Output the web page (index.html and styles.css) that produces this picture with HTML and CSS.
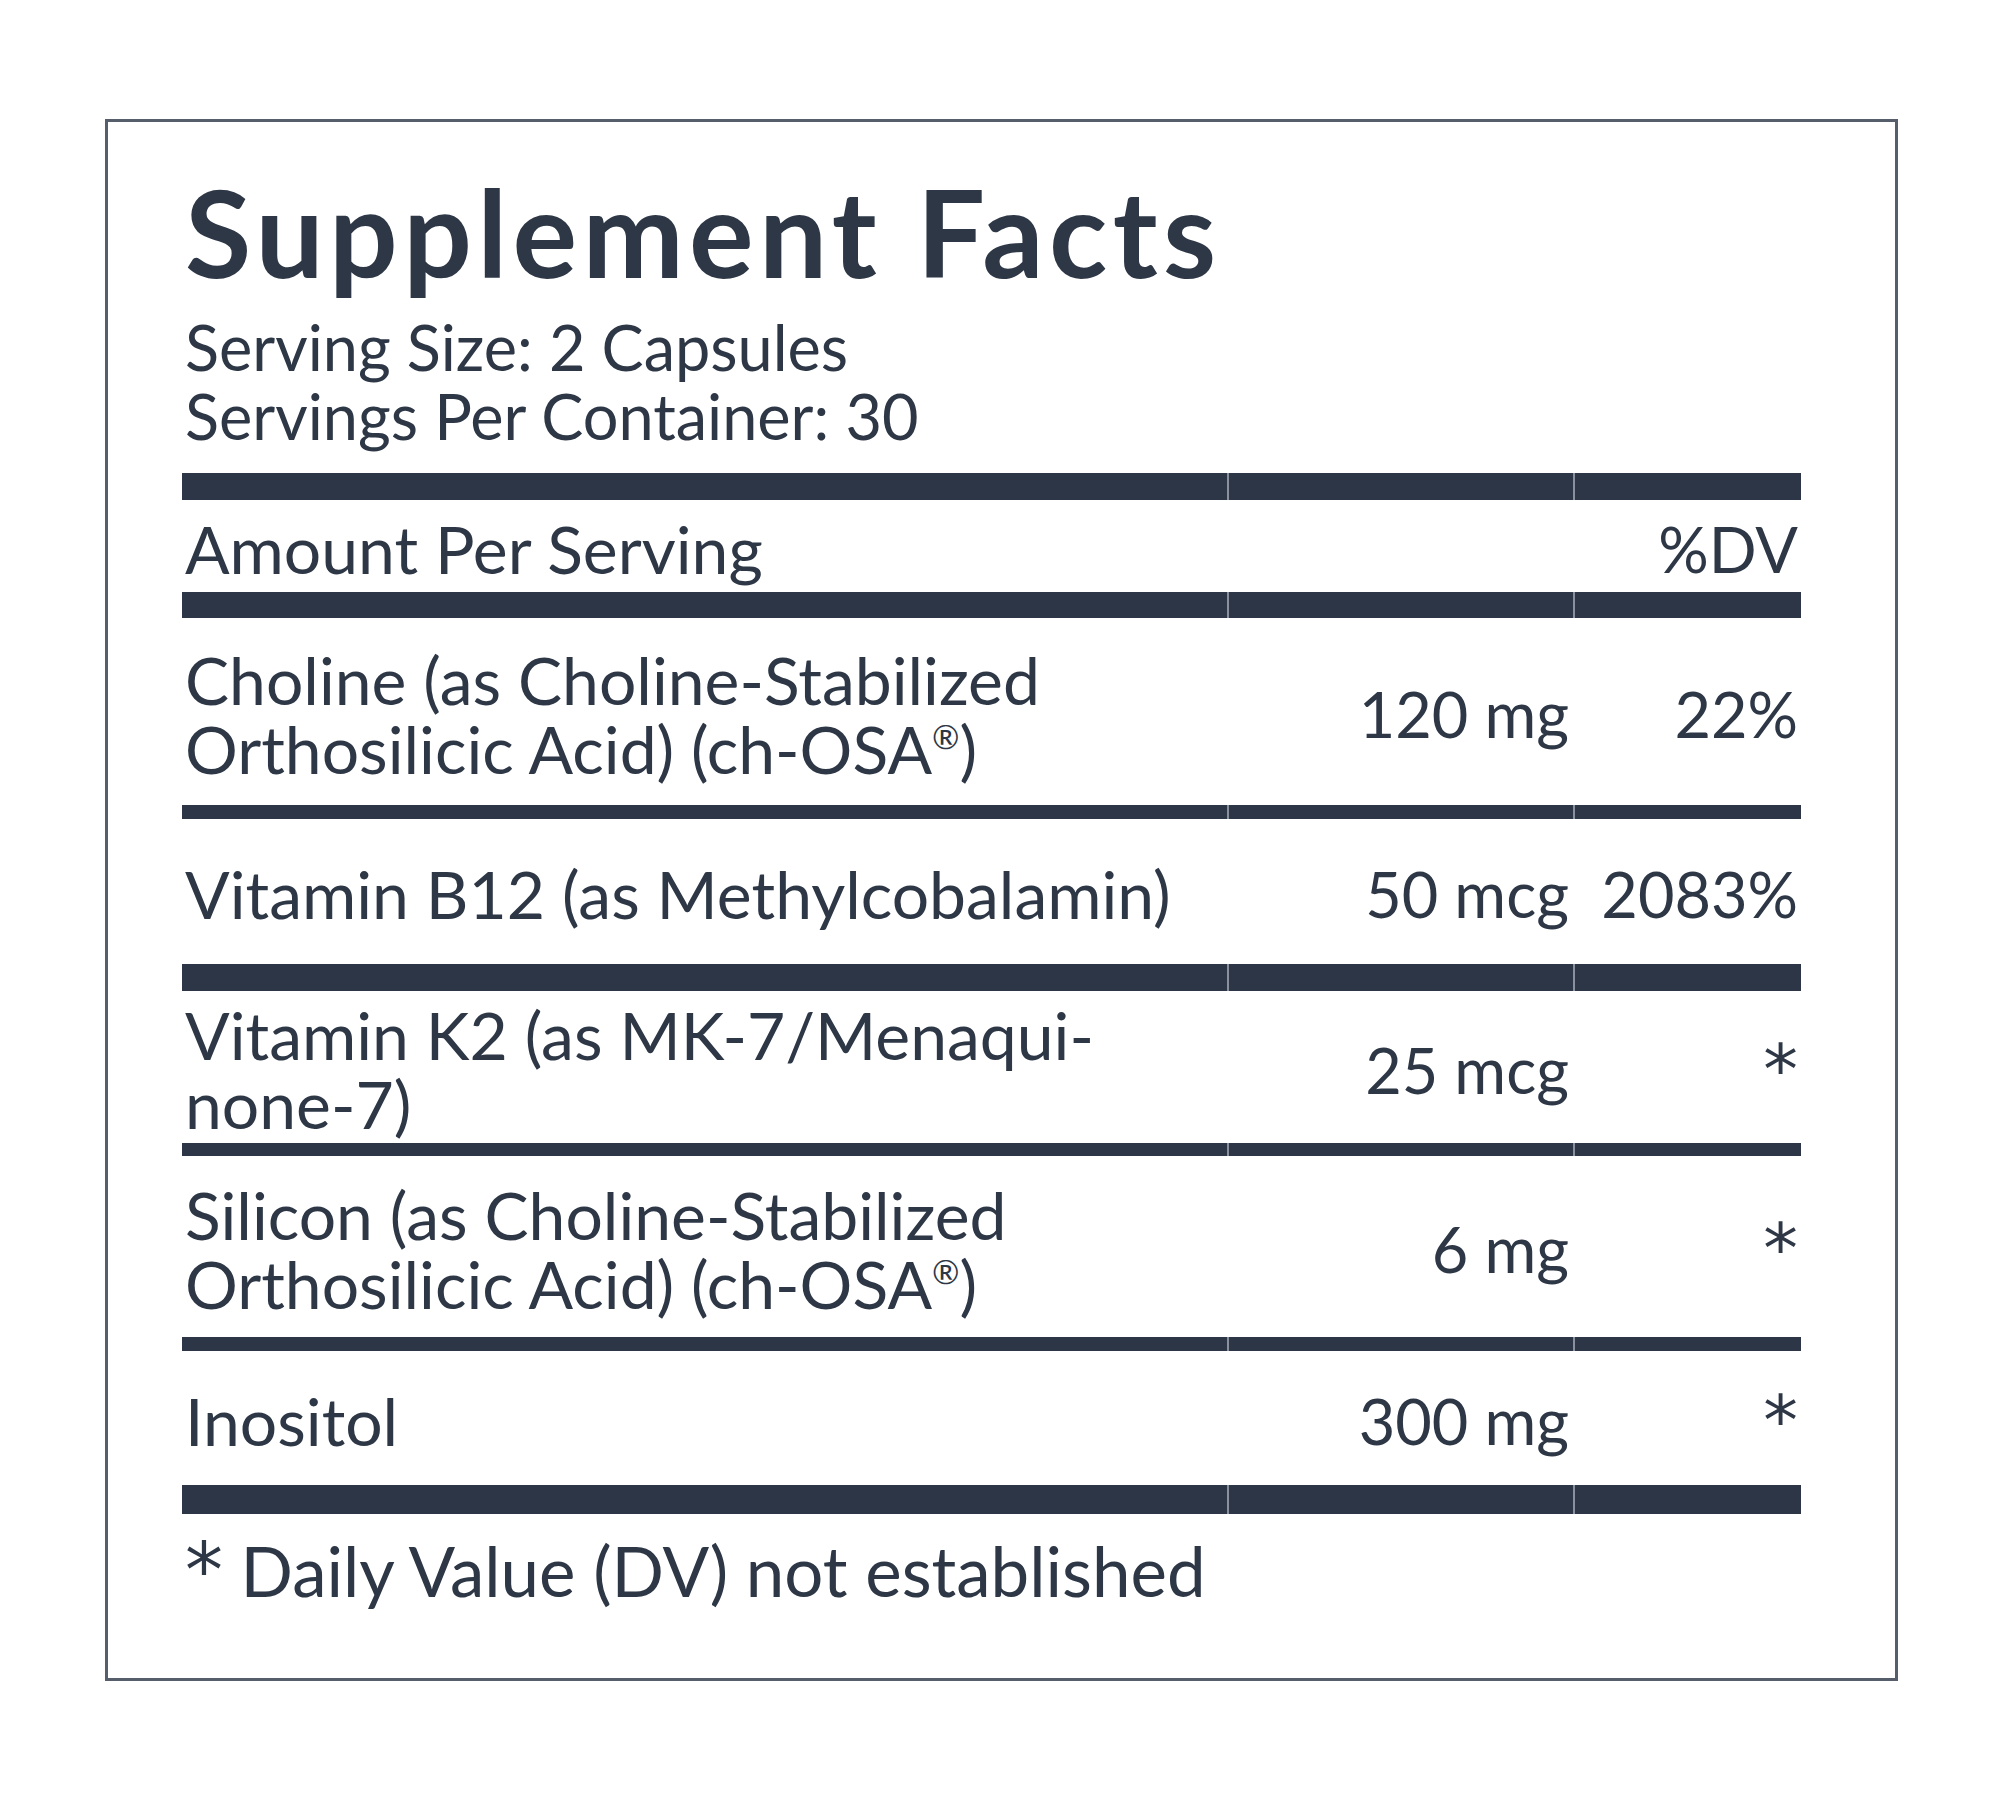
FILE: index.html
```html
<!DOCTYPE html>
<html lang="en">
<head>
<meta charset="utf-8">
<title>Supplement Facts</title>
<link rel="stylesheet" href="styles.css">
</head>
<body>
<section class="facts">
  <h1 class="title">Supplement Facts</h1>
  <p class="serving">Serving Size: 2 Capsules<br>Servings Per Container: 30</p>
  <table class="grid">
    <colgroup>
      <col class="c-name"><col class="c-amt"><col class="c-dv">
    </colgroup>
    <thead>
      <tr class="row row-head">
        <th class="name">Amount Per Serving</th>
        <th class="amt"></th>
        <th class="dv">%DV</th>
      </tr>
    </thead>
    <tbody>
      <tr class="row row-choline">
        <td class="name">Choline (as Choline-Stabilized<br>Orthosilicic Acid) (ch-OSA<span class="reg">®</span>)</td>
        <td class="amt">120 mg</td>
        <td class="dv">22%</td>
      </tr>
      <tr class="row row-b12">
        <td class="name">Vitamin B12 (as Methylcobalamin)</td>
        <td class="amt">50 mcg</td>
        <td class="dv">2083%</td>
      </tr>
      <tr class="row row-k2">
        <td class="name">Vitamin K2 (as MK-7/Menaqui-<br>none-7)</td>
        <td class="amt">25 mcg</td>
        <td class="dv"><span class="ast">*</span></td>
      </tr>
      <tr class="row row-silicon">
        <td class="name">Silicon (as Choline-Stabilized<br>Orthosilicic Acid) (ch-OSA<span class="reg">®</span>)</td>
        <td class="amt">6 mg</td>
        <td class="dv"><span class="ast">*</span></td>
      </tr>
      <tr class="row row-inositol">
        <td class="name">Inositol</td>
        <td class="amt">300 mg</td>
        <td class="dv"><span class="ast">*</span></td>
      </tr>
    </tbody>
  </table>
  <p class="note"><span class="ast">*</span> Daily Value (DV) not established</p>
</section>
</body>
</html>
```

FILE: styles.css
```css
html, body {
  margin: 0;
  padding: 0;
  background: #ffffff;
}

body {
  font-family: "Lato", "Open Sans", sans-serif;
  color: #2d3746;
}

.facts {
  box-sizing: border-box;
  width: 1793px;
  height: 1562px;
  margin: 119px 0 0 105px;
  border: 3px solid #575e6b;
  padding: 49px 94px 0 74px;
}

.title {
  margin: 0;
  font-size: 121px;
  font-weight: 700;
  line-height: 121px;
  padding-left: 3px;
  letter-spacing: 5.3px;
}

.serving {
  margin: 20px 0 0;
  padding-left: 3px;
  font-size: 63px;
  line-height: 69px;
  font-weight: 400;
}

.grid {
  width: 1619px;
  margin-top: 23px;
  border-collapse: collapse;
  border-spacing: 0;
  table-layout: fixed;
  font-size: 63px;
  line-height: 69px;
}

.c-name { width: 1045px; }
.c-amt { width: 346px; }
.c-dv { width: 228px; }

.row th,
.row td {
  --bar: 14px;
  box-sizing: content-box;
  padding: 4px 0 var(--bar) 0;
  vertical-align: middle;
  font-weight: 400;
  background-image: linear-gradient(#2c3646, #2c3646);
  background-repeat: no-repeat;
  background-position: left bottom;
  background-size: 100% var(--bar);
}

.row .amt,
.row .dv {
  background-image: linear-gradient(to right, #8a919c 0, #8a919c 2px, #2c3646 2px, #2c3646 100%);
}

.row .name {
  text-align: left;
  padding-left: 3px;
  font-size: 66px;
}

.row .amt {
  text-align: right;
  padding-right: 4px;
}

.row .dv {
  text-align: right;
  padding-right: 3px;
}

/* header row: thick bar above and below */
.row-head th {
  --bar: 26px;
  height: 88px;
  padding-top: 31px;
  background-image:
    linear-gradient(#2c3646, #2c3646),
    linear-gradient(#2c3646, #2c3646);
  background-position: left top, left bottom;
  background-size: 100% 27px, 100% 26px;
}

.row-head .amt,
.row-head .dv {
  background-image:
    linear-gradient(to right, #8a919c 0, #8a919c 2px, #2c3646 2px, #2c3646 100%),
    linear-gradient(to right, #8a919c 0, #8a919c 2px, #2c3646 2px, #2c3646 100%);
}

.row-choline td { --bar: 14px; height: 183px; }
.row-b12 td { --bar: 27px; height: 141px; }
.row-k2 td { --bar: 13px; height: 148px; }
.row-silicon td { --bar: 14px; height: 177px; }
.row-inositol td { --bar: 29px; height: 130px; }

.reg {
  font-size: 0.5em;
  vertical-align: 0.75em;
  line-height: 0;
}

.ast {
  font-family: "DejaVu Sans", sans-serif;
  font-size: 1.1em;
  line-height: 0;
}

.note {
  margin: 19px 0 0;
  padding-left: 3px;
  font-size: 69px;
  line-height: 75px;
}
```
